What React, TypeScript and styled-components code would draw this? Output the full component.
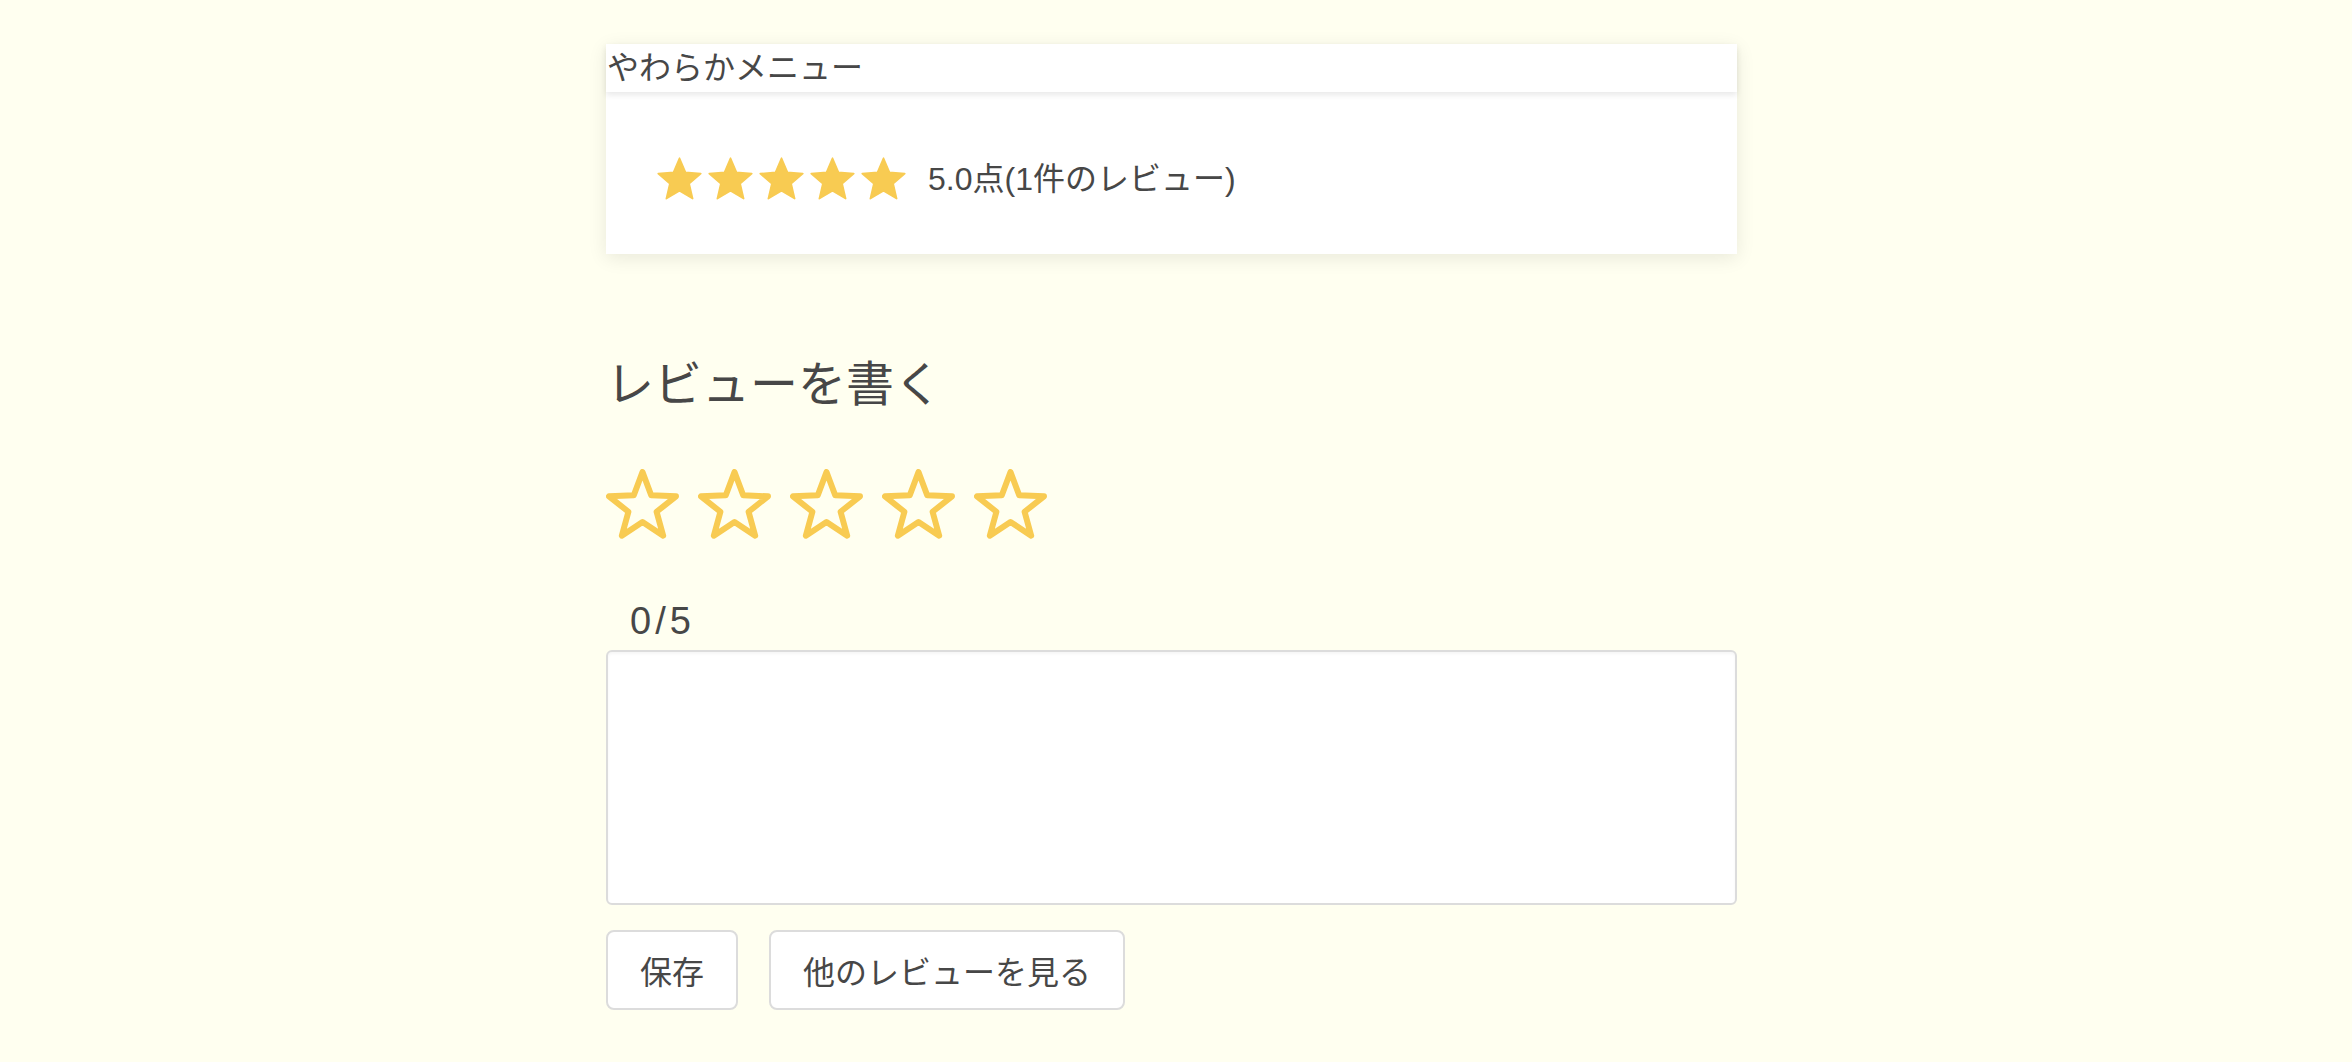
import React from "react";
import styled, { createGlobalStyle } from "styled-components";

const GlobalStyle = createGlobalStyle`
  html, body {
    margin: 0;
    padding: 0;
    background: #fffff0;
  }
  body {
    font-family: "Liberation Sans", "Noto Sans CJK JP", sans-serif;
    color: #474747;
  }
`;

const Page = styled.div`
  width: 1140px;
  margin: 0 auto;
  padding: 44px 9px 40px 0;
  box-sizing: border-box;
  display: flex;
  flex-direction: column;
`;

const Card = styled.section`
  background: #ffffff;
  box-shadow: 0 4px 18px rgba(0, 0, 0, 0.09);
  display: flex;
  flex-direction: column;
`;

const CardHeader = styled.header`
  position: relative;
  z-index: 1;
  height: 48px;
  line-height: 48px;
  font-size: 32px;
  background: #ffffff;
  box-shadow: 0 3px 6px rgba(0, 0, 0, 0.09);
  padding-left: 1px;
`;

const CardBody = styled.div`
  height: 162px;
  box-sizing: border-box;
  padding: 12px 48px 0;
  display: flex;
  align-items: center;
`;

const StarRow = styled.div<{ $gap: number }>`
  display: flex;
  align-items: center;
  gap: ${(p) => p.$gap}px;
`;

const RatingText = styled.span`
  margin-left: 19px;
  font-size: 32px;
  line-height: 1;
`;

const Heading = styled.h2`
  margin: 107px 0 0 0;
  font-size: 48px;
  font-weight: 400;
  line-height: 48px;
`;

const InputStars = styled(StarRow)`
  margin-top: 60px;
`;

const Counter = styled.div`
  margin-top: 63px;
  padding-left: 24px;
  font-size: 38px;
  line-height: 38px;
  letter-spacing: 4px;
`;

const TextArea = styled.textarea`
  margin-top: 10px;
  height: 255px;
  width: 100%;
  box-sizing: border-box;
  border: 2px solid #dcdcdc;
  border-radius: 6px;
  background: #ffffff;
  box-shadow: inset 0 2px 3px rgba(0, 0, 0, 0.04);
  resize: none;
  font-family: inherit;
  font-size: 32px;
  outline: none;
`;

const ButtonRow = styled.div`
  margin-top: 25px;
  display: flex;
  gap: 31px;
`;

const Button = styled.button`
  height: 80px;
  padding: 0 32px;
  background: #ffffff;
  border: 2px solid #dcdcdc;
  border-radius: 8px;
  font-family: "Liberation Sans", "Noto Sans CJK JP", sans-serif;
  font-size: 32px;
  color: #474747;
  cursor: pointer;
`;

const STAR_COLOR = "#f8cb52";

const FilledStar = () => (
  <svg width="51" height="51" viewBox="0 0 24 24">
    <path
      d="M12 17.27L18.18 21l-1.64-7.03L22 9.24l-7.19-.61L12 2 9.19 8.63 2 9.24l5.46 4.73L5.82 21z"
      fill={STAR_COLOR}
      stroke={STAR_COLOR}
      strokeWidth="0.8"
      strokeLinejoin="round"
    />
  </svg>
);

const OutlineStar = () => (
  <svg width="73" height="70" viewBox="0 0 73 70">
    <polygon
      points="36.5,3 45.2,26.23 69.98,27.32 50.58,42.77 57.19,66.68 36.5,53 15.81,66.68 22.42,42.77 3.02,27.32 27.8,26.23"
      fill="none"
      stroke={STAR_COLOR}
      strokeWidth="6"
      strokeLinejoin="round"
    />
  </svg>
);

export default function App() {
  const five = [0, 1, 2, 3, 4];
  return (
    <>
      <GlobalStyle />
      <Page>
        <Card>
          <CardHeader>やわらかメニュー</CardHeader>
          <CardBody>
            <StarRow $gap={0}>
              {five.map((i) => (
                <FilledStar key={i} />
              ))}
            </StarRow>
            <RatingText>5.0点(1件のレビュー)</RatingText>
          </CardBody>
        </Card>
        <Heading>レビューを書く</Heading>
        <InputStars $gap={19}>
          {five.map((i) => (
            <OutlineStar key={i} />
          ))}
        </InputStars>
        <Counter>0/5</Counter>
        <TextArea />
        <ButtonRow>
          <Button>保存</Button>
          <Button>他のレビューを見る</Button>
        </ButtonRow>
      </Page>
    </>
  );
}
